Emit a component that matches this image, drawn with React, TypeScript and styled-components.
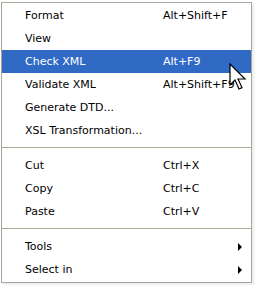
import styled, { createGlobalStyle } from 'styled-components';

const GlobalStyle = createGlobalStyle`
  html, body {
    margin: 0;
    padding: 0;
    background: #ffffff;
  }
`;

const Page = styled.div`
  width: 266px;
  height: 290px;
  padding: 2px 0 0 1px;
  box-sizing: border-box;
  position: relative;
  overflow: hidden;
`;

const Menu = styled.div`
  width: 251px;
  box-sizing: border-box;
  border: 1px solid #a9a69b;
  background: #ffffff;
  padding: 1px 0 1px;
  font-family: 'DejaVu Sans', Verdana, sans-serif;
  font-size: 11px;
  color: #000000;
  box-shadow: 2px 2px 2px rgba(0, 0, 0, 0.08);
`;

const Row = styled.div<{ $active?: boolean }>`
  height: 23px;
  display: grid;
  grid-template-columns: 139px 1fr 13px;
  align-items: center;
  padding-left: 22px;
  background: ${(p) => (p.$active ? '#316ac5' : 'transparent')};
  color: ${(p) => (p.$active ? '#ffffff' : '#000000')};
  white-space: nowrap;
`;

const Label = styled.span`
  padding-left: 1px;
`;

const Shortcut = styled.span`
  padding-left: 0;
`;

const Arrow = styled.span`
  width: 0;
  height: 0;
  border-top: 4px solid transparent;
  border-bottom: 4px solid transparent;
  border-left: 4px solid #000000;
  justify-self: start;
`;

const Separator = styled.div`
  height: 12px;
  display: flex;
  align-items: center;
  &::after {
    content: '';
    flex: 1;
    height: 1px;
    background: #aca899;
    margin-top: -1px;
  }
`;

const Cursor = styled.svg`
  position: absolute;
  left: 229px;
  top: 63px;
`;

type Item =
  | { kind: 'item'; label: string; shortcut?: string; sub?: boolean; active?: boolean }
  | { kind: 'sep' };

const items: Item[] = [
  { kind: 'item', label: 'Format', shortcut: 'Alt+Shift+F' },
  { kind: 'item', label: 'View' },
  { kind: 'item', label: 'Check XML', shortcut: 'Alt+F9', active: true },
  { kind: 'item', label: 'Validate XML', shortcut: 'Alt+Shift+F9' },
  { kind: 'item', label: 'Generate DTD...' },
  { kind: 'item', label: 'XSL Transformation...' },
  { kind: 'sep' },
  { kind: 'item', label: 'Cut', shortcut: 'Ctrl+X' },
  { kind: 'item', label: 'Copy', shortcut: 'Ctrl+C' },
  { kind: 'item', label: 'Paste', shortcut: 'Ctrl+V' },
  { kind: 'sep' },
  { kind: 'item', label: 'Tools', sub: true },
  { kind: 'item', label: 'Select in', sub: true },
];

function App() {
  return (
    <Page>
      <GlobalStyle />
      <Menu>
        {items.map((it, i) =>
          it.kind === 'sep' ? (
            <Separator key={i} />
          ) : (
            <Row key={i} $active={it.active}>
              <Label>{it.label}</Label>
              <Shortcut>{it.shortcut || ''}</Shortcut>
              {it.sub ? <Arrow /> : <span />}
            </Row>
          )
        )}
      </Menu>
      <Cursor width="18" height="29" viewBox="0 0 18 29">
        <path
          d="M1 1 L1 22 L6 17 L10 26 L13 24.6 L9 16 L16 16 Z"
          fill="#ffffff"
          stroke="#000000"
          strokeWidth="1.2"
          strokeLinejoin="miter"
        />
      </Cursor>
    </Page>
  );
}

export default App;
